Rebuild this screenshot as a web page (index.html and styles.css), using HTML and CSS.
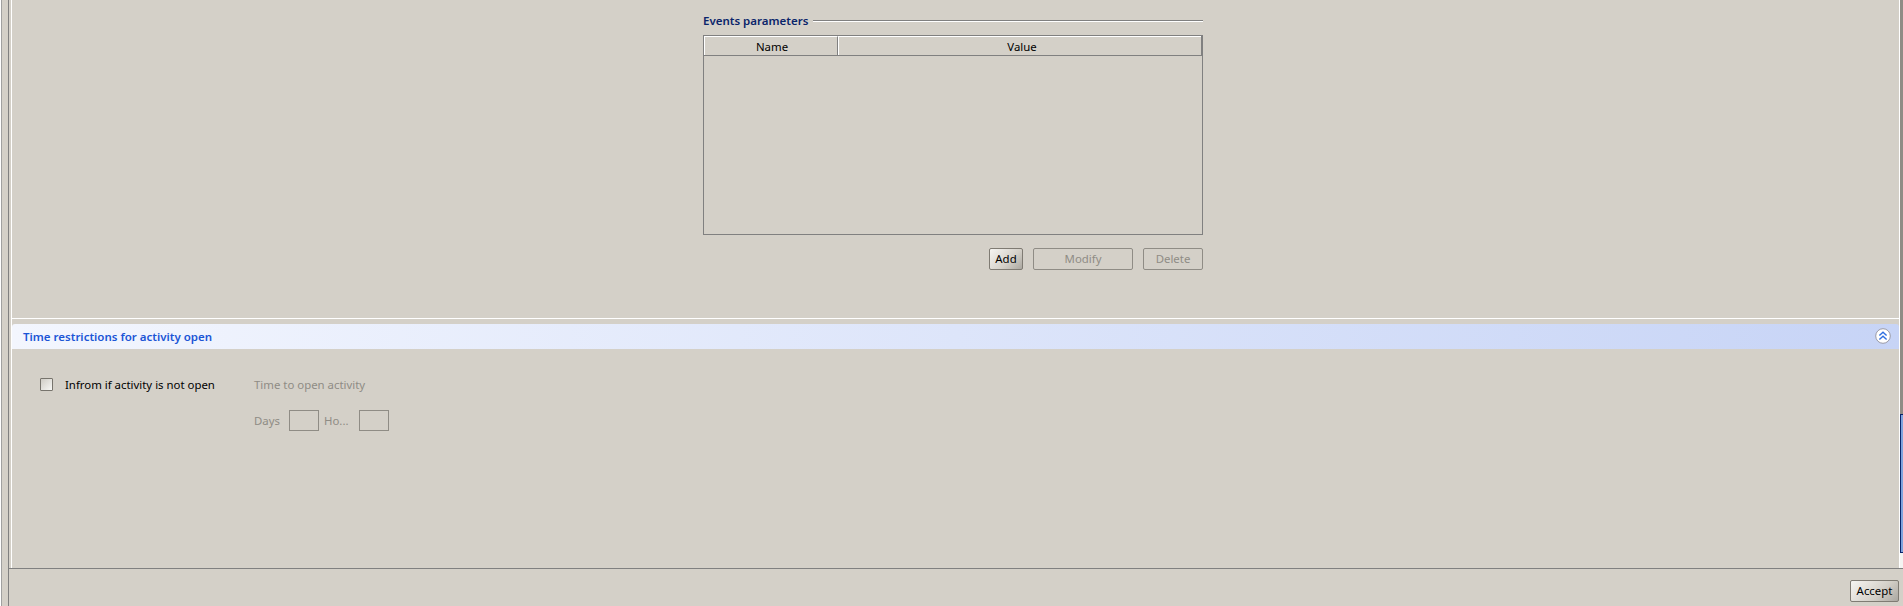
FILE: index.html
```html
<!DOCTYPE html>
<html lang="en">
<head>
<meta charset="utf-8">
<title>Time restrictions</title>
<link rel="stylesheet" href="styles.css">
</head>
<body>
<div class="app">
  <div class="rail"></div>
  <div class="content">
    <div class="upper">
      <div class="panel">
        <section class="top">
          <div class="group">
            <div class="group-title"><span>Events parameters</span><i class="rule"></i></div>
            <div class="table">
              <div class="thead">
                <div class="th name">Name</div>
                <div class="th value">Value</div>
              </div>
            </div>
            <div class="actions">
              <button class="btn add">Add</button>
              <button class="btn modify" disabled>Modify</button>
              <button class="btn delete" disabled>Delete</button>
            </div>
          </div>
        </section>
        <section class="section">
          <header class="band">
            <span>Time restrictions for activity open</span>
            <svg class="collapse" width="16" height="16" viewBox="0 0 16 16" aria-hidden="true">
              <circle cx="8" cy="8" r="7.3" fill="#fff" stroke="#9a9aa6"/>
              <path d="M4.4 7.6 8 4.2l3.6 3.4M4.4 11.6 8 8.2l3.6 3.4" fill="none" stroke="#2f6fe0" stroke-width="1.4"/>
            </svg>
          </header>
          <div class="form">
            <label class="check"><i class="box"></i><span>Infrom if activity is not open</span></label>
            <div class="time">
              <div class="time-title">Time to open activity</div>
              <div class="time-row">
                <span class="lbl-days">Days</span><i class="input"></i>
                <span class="lbl-hours">Ho...</span><i class="input"></i>
              </div>
            </div>
          </div>
        </section>
      </div>
      <div class="scroll"><div class="thumb"></div><div class="track-end"></div></div>
    </div>
    <footer class="footer"><button class="btn accept">Accept</button></footer>
  </div>
</div>
</body>
</html>
```
FILE: styles.css
```css
* { box-sizing: border-box; }
html, body { margin: 0; height: 100%; overflow: hidden; }
body { background: #d4d0c8; font: 11.4px "Noto Sans", "Liberation Sans", sans-serif; color: #000; }
.app { display: flex; width: 1903px; height: 606px; }
.rail { width: 9px; flex: none; background: #d4d0c8; border-left: 1px solid #fff; border-right: 1px solid #808080; box-shadow: inset 1px 0 0 #a0a0a0; }
.content { flex: 1; display: flex; flex-direction: column; min-width: 0; }
.upper { height: 569px; flex: none; display: flex; border-bottom: 1px solid #808080; }
.panel { flex: 1; margin-left: 2px; border-left: 1px solid #fff; border-right: 1px solid #fff; display: flex; flex-direction: column; min-width: 0; }
.top { height: 319px; flex: none; border-bottom: 1px solid #fff; padding: 14px 0 0 691px; }
.group { width: 500px; }
.group-title { display: flex; align-items: center; gap: 5px; height: 14px; font-size: 11.5px; font-weight: 600; color: #0a246a; }
.group-title span { margin-top: -2px; }
.rule { flex: 1; height: 2px; border-top: 1px solid #808080; border-bottom: 1px solid #fff; }
.table { margin-top: 7px; height: 200px; border: 1px solid #808080; }
.thead { display: flex; height: 20px; border-bottom: 1px solid #808080; border-right: 1px solid #808080; }
.th { text-align: center; line-height: 19px; padding-left: 2px; border-left: 1px solid #fff; border-top: 1px solid #fff; }
.name { width: 134px; border-right: 1px solid #808080; }
.value { flex: 1; padding-left: 4px; }
.actions { display: flex; justify-content: flex-end; gap: 10px; margin-top: 13px; }
.btn { height: 22px; padding: 0 0 2px; font: inherit; color: #000; border: 1px solid #7f7b73; border-radius: 2px; background: linear-gradient(135deg, #f6f5f2 0%, #d4d0c8 60%, #aaa7a0 100%); }
.btn:disabled { background: none; color: #8f8c85; border-color: #8f8c85; }
.add { width: 34px; }
.modify { width: 100px; }
.delete { width: 60px; }
.section { flex: 1; padding-top: 5px; }
.band { height: 25px; display: flex; align-items: center; justify-content: space-between; padding: 0 8px 1px 11px; border-radius: 3px 3px 0 0; background: linear-gradient(90deg, #f3f6fe 0%, #c7d4f6 100%); color: #1b55d6; font-size: 11.5px; font-weight: 600; }
.collapse { flex: none; }
.form { display: flex; padding: 26px 0 0 28px; }
.check { display: flex; align-items: center; gap: 12px; width: 174px; height: 19px; flex: none; white-space: nowrap; }
.box { flex: none; width: 13px; height: 13px; border: 1px solid #77746d; border-radius: 1px; background: linear-gradient(135deg, #cfccc5, #f7f7f5); }
.time { margin-left: 40px; color: #8f8c85; }
.time-title { height: 19px; line-height: 19px; }
.time-row { display: flex; align-items: center; margin-top: 16px; height: 21px; }
.input { width: 30px; height: 21px; border: 1px solid #8f8c85; }
.lbl-days { width: 35px; }
.lbl-hours { width: 40px; padding-left: 5px; }
.scroll { width: 3px; flex: none; background: #8f8c85; display: flex; flex-direction: column; padding-top: 414px; }
.thumb { height: 139px; background: #7fa3dc; border: 1px solid #0a246a; border-right: 0; }
.track-end { flex: 1; background: #f4f4f2; }
.footer { flex: 1; display: flex; justify-content: flex-end; align-items: flex-start; padding: 11px 4px 0 0; }
.accept { width: 49px; }
```
